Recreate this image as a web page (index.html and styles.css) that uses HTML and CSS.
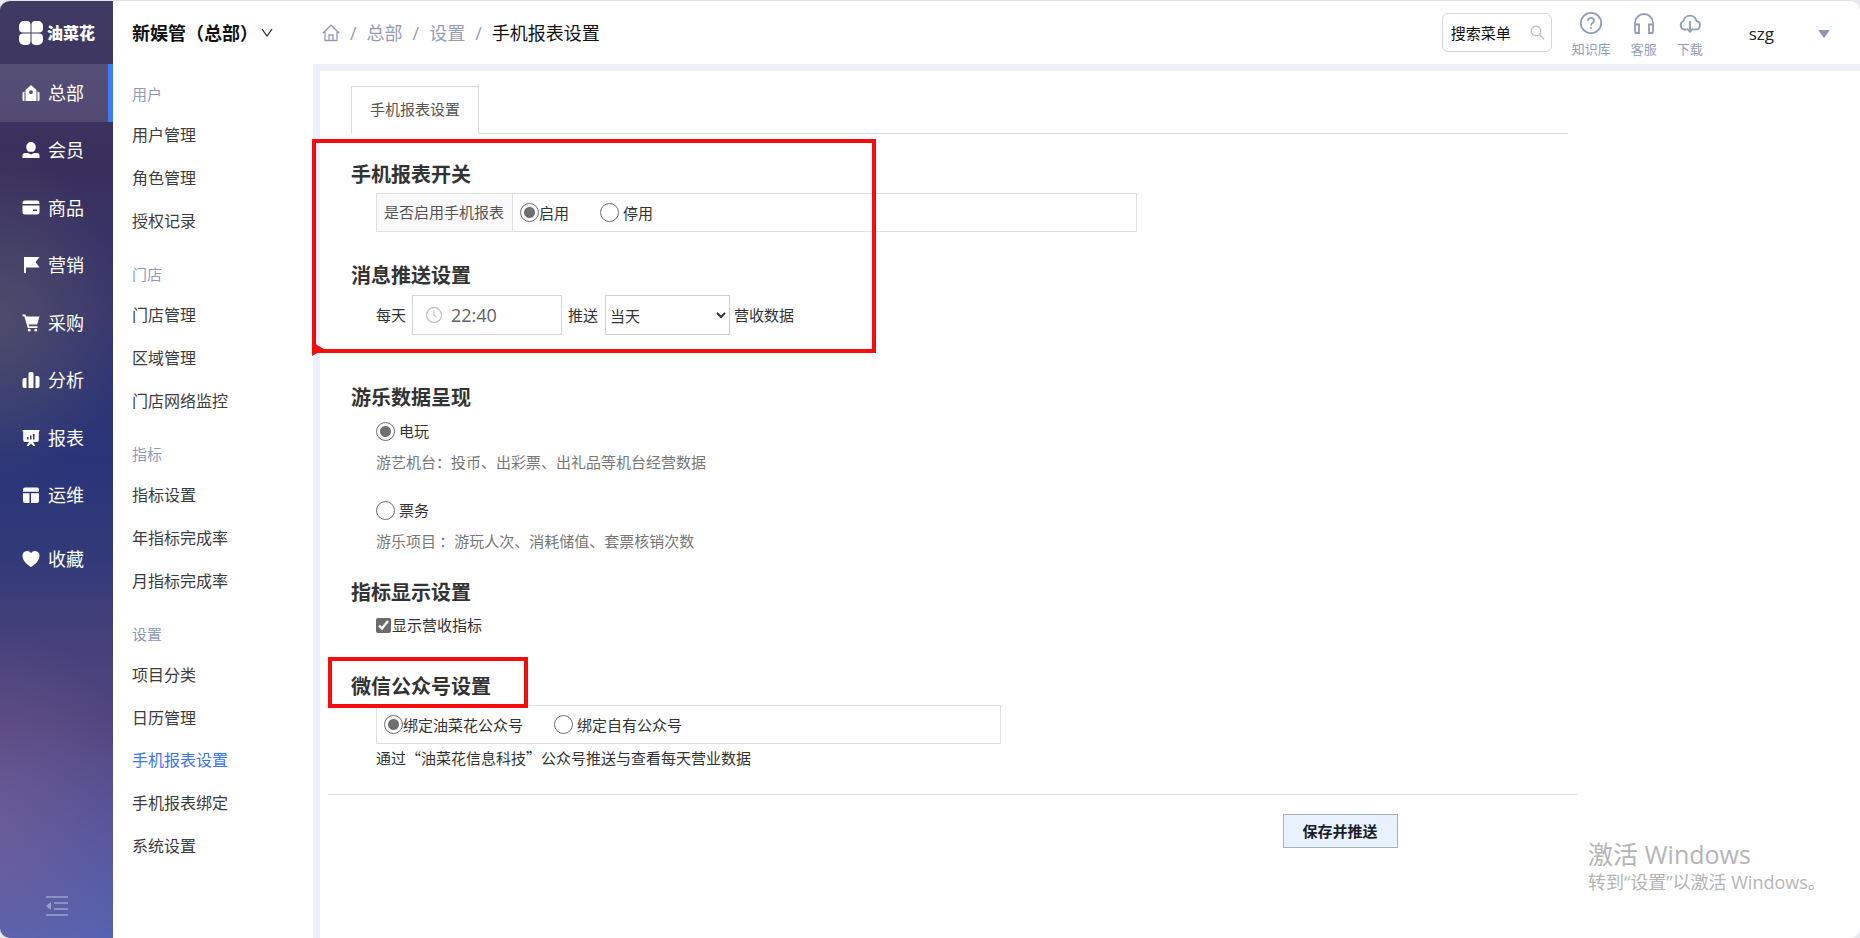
FILE: index.html
```html
<!DOCTYPE html>
<html lang="zh-CN">
<head>
<meta charset="utf-8">
<title>手机报表设置</title>
<link rel="stylesheet" href="styles.css">
</head>
<body>
<div class="shell">
  <aside class="rail">
    <a class="brand" href="#">
      <svg width="24" height="24" viewBox="0 0 24 24" fill="#fff"><path d="M5 0h3a3.500 3.500 0 0 1 3.500 3.500v8H4A4 4 0 0 1 0 7.500V5a5 5 0 0 1 5-5z"/><path d="M16 0h3a5 5 0 0 1 5 5v2.500a4 4 0 0 1-4 4h-7.500v-8A3.500 3.500 0 0 1 16 0z"/><path d="M4 12.500h7.500V20a4 4 0 0 1-4 4H5a5 5 0 0 1-5-5v-2.500a4 4 0 0 1 4-4z"/><path d="M12.500 12.500H20a4 4 0 0 1 4 4V19a5 5 0 0 1-5 5h-2.500a4 4 0 0 1-4-4z"/></svg>
      <span>油菜花</span>
    </a>
    <nav class="rail-nav">
      <a class="active" href="#"><svg viewBox="0 0 18 18"><path fill-rule="evenodd" d="M3.500 17V6L9 1l5.500 5v11zM9 6.300a1.900 1.900 0 1 0 0 3.800 1.900 1.900 0 0 0 0-3.800z"/><path d="M.5 8.500 2.500 7.500V17H1.500a1 1 0 0 1-1-1zM17.500 8.500l-2-1V17h1a1 1 0 0 0 1-1z"/></svg>总部</a>
      <a href="#"><svg viewBox="0 0 18 18"><path d="M9 1a4.800 4.800 0 0 1 4.800 4.800c0 2.300-1 4-2.300 5h-5c-1.300-1-2.300-2.700-2.300-5A4.800 4.800 0 0 1 9 1zM3 12h3l3 1.500 3-1.500h3a2.500 2.500 0 0 1 2.500 2.500V17H.5v-2.500A2.500 2.500 0 0 1 3 12z"/></svg>会员</a>
      <a href="#"><svg viewBox="0 0 18 18"><path d="M3 1.500h12A2.500 2.500 0 0 1 17.500 4v1H.5V4A2.500 2.500 0 0 1 3 1.500z"/><path fill-rule="evenodd" d="M.5 6.500h17V13a2.500 2.500 0 0 1-2.500 2.500H3A2.500 2.500 0 0 1 .5 13zM11 10.500v1.500h4v-1.500z"/></svg>商品</a>
      <a href="#"><svg viewBox="0 0 18 18"><path d="M2 1h15.500l-4 5 4 5.500H4V17H2z"/></svg>营销</a>
      <a href="#"><svg viewBox="0 0 18 18"><path d="M.5.5h2.800l1 2H17.500l-2.300 8H6.500l.6 1.800h8.400v1.700H5.800L2.300 2.200H.5z"/><circle cx="7.200" cy="16.200" r="1.400"/><circle cx="13.800" cy="16.200" r="1.400"/></svg>采购</a>
      <a href="#"><svg viewBox="0 0 18 18"><path d="M2.500 7h2v10h-2a2 2 0 0 1-2-2V9a2 2 0 0 1 2-2zM8 1h2a1.500 1.500 0 0 1 1.500 1.500V17h-5V2.500A1.500 1.500 0 0 1 8 1zM13.500 5h2a2 2 0 0 1 2 2v8a2 2 0 0 1-2 2h-2z"/></svg>分析</a>
      <a href="#"><svg viewBox="0 0 18 18"><path fill-rule="evenodd" d="M.5 1h17v1.500h-.7V11a2 2 0 0 1-2 2H11l2.500 4h-2.200L9 14.500 6.700 17H4.500L7 13H3.200a2 2 0 0 1-2-2V2.500H.5zM5 8v2.500h1.500V8zm3-1.500v4h1.500v-4zM11 5v5.500h1.500V5z"/></svg>报表</a>
      <a href="#"><svg viewBox="0 0 18 18"><path d="M3 1.500h12a2 2 0 0 1 2 2v2.200H1V3.500a2 2 0 0 1 2-2zM1 7.200h6.500V17H3a2 2 0 0 1-2-2zM9 7.200h8V15a2 2 0 0 1-2 2H9z"/></svg>运维</a>
    </nav>
    <nav class="rail-fav">
      <a href="#"><svg viewBox="0 0 18 18"><path d="M9 17C6 15 .5 11 .5 6A4.700 4.700 0 0 1 9 3a4.700 4.700 0 0 1 8.500 3c0 5-5.500 9-8.500 11z"/></svg>收藏</a>
    </nav>
    <button class="collapse" aria-label="收起菜单"><svg width="24" height="20" viewBox="0 0 24 20" stroke="#9aa2cc" stroke-width="1.600" fill="none"><path d="M1 1h22M9 7h14M9 13h14M1 19h22"/><path fill="#9aa2cc" stroke="none" d="M6 6v8l-5-4z"/></svg></button>
  </aside>

  <aside class="side">
    <button class="org">新娱管（总部）<svg width="12" height="10" viewBox="0 0 12 10" fill="none" stroke="#222" stroke-width="1.200"><path d="m1 1 5 7 5-7"/></svg></button>
    <nav>
      <h2>用户</h2>
      <ul><li><a href="#">用户管理</a></li><li><a href="#">角色管理</a></li><li><a href="#">授权记录</a></li></ul>
      <h2>门店</h2>
      <ul><li><a href="#">门店管理</a></li><li><a href="#">区域管理</a></li><li><a href="#">门店网络监控</a></li></ul>
      <h2>指标</h2>
      <ul><li><a href="#">指标设置</a></li><li><a href="#">年指标完成率</a></li><li><a href="#">月指标完成率</a></li></ul>
      <h2>设置</h2>
      <ul class="five"><li><a href="#">项目分类</a></li><li><a href="#">日历管理</a></li><li><a class="current" href="#">手机报表设置</a></li><li><a href="#">手机报表绑定</a></li><li><a href="#">系统设置</a></li></ul>
    </nav>
  </aside>

  <div class="page">
    <header class="topbar">
      <nav class="crumbs">
        <a href="#" aria-label="首页"><svg width="18" height="18" viewBox="0 0 18 18" fill="none" stroke="#959db5" stroke-width="1.300"><path d="M.7 9.200 9 1.200l8.300 8M3 7.500V16.500h12V7.500M7 16.500v-5.500h4v5.500"/></svg></a>
        <span>/</span><a href="#">总部</a><span>/</span><a href="#">设置</a><span>/</span><b>手机报表设置</b>
      </nav>
      <div class="tools">
        <label class="search"><input type="text" value="搜索菜单" aria-label="搜索菜单"><svg width="15" height="15" viewBox="0 0 15 15" fill="none" stroke="#bbb" stroke-width="1.200"><circle cx="6" cy="6" r="4.800"/><path d="m9.500 9.500 4.500 4.500"/></svg></label>
        <a class="tool" href="#"><svg width="24" height="24" viewBox="0 0 24 24"><circle cx="12" cy="12" r="10.200"/><path d="M9 10c0-4 6-4 6-.5 0 2.200-3 2.500-3 5M12 16.200v1.600"/></svg>知识库</a>
        <a class="tool" href="#"><svg width="24" height="24" viewBox="0 0 24 24"><path d="M3 20v-8a9 9 0 0 1 18 0v8M3 13.500h4V22H4a1 1 0 0 1-1-1zM21 13.500h-4V22h3a1 1 0 0 0 1-1z"/></svg>客服</a>
        <a class="tool" href="#"><svg width="24" height="24" viewBox="0 0 24 24"><path d="M8.500 18.500H6A4.500 4.500 0 0 1 5.500 10 6.600 6.600 0 0 1 18.500 10 4.300 4.300 0 0 1 18 18.500h-2.500M12 10v10.500M9 17.700l3 3 3-3"/></svg>下载</a>
        <button class="user">szg<svg width="12" height="8" viewBox="0 0 12 8" fill="#8f96b3"><path d="M0 0h12L6 8z"/></svg></button>
      </div>
    </header>

    <main class="content">
      <div class="tabs"><button class="tab">手机报表设置</button></div>
      <form class="settings">
        <section class="switch">
          <h3>手机报表开关</h3>
          <div class="field wide">
            <span class="name">是否启用手机报表</span>
            <div class="choices">
              <span><input type="radio" name="on" id="on1" checked><label for="on1">启用</label></span>
              <span class="spaced"><input type="radio" name="on" id="on2"><label for="on2">停用</label></span>
            </div>
          </div>
        </section>
        <section class="push">
          <h3>消息推送设置</h3>
          <div class="line">
            <label for="time">每天</label>
            <span class="time"><svg width="18" height="18" viewBox="0 0 18 18" fill="none" stroke="#c0c4cc" stroke-width="1.300"><circle cx="9" cy="9" r="7.500"/><path d="M9 4.500V9.500l2.500 1.500"/></svg><input id="time" type="text" value="22:40"></span>
            <label for="day">推送</label>
            <select id="day"><option>当天</option></select>
            <span class="tail">营收数据</span>
          </div>
        </section>
        <section class="data">
          <h3>游乐数据呈现</h3>
          <div class="option"><input type="radio" name="kind" id="k1" checked><label for="k1">电玩</label></div>
          <p>游艺机台：投币、出彩票、出礼品等机台经营数据</p>
          <div class="option second"><input type="radio" name="kind" id="k2"><label for="k2">票务</label></div>
          <p>游乐项目 ：游玩人次、消耗储值、套票核销次数</p>
        </section>
        <section class="target">
          <h3>指标显示设置</h3>
          <div class="check"><input type="checkbox" id="show" checked><label for="show">显示营收指标</label></div>
        </section>
        <section class="wechat">
          <h3>微信公众号设置</h3>
          <div class="field">
            <div class="choices">
              <span><input type="radio" name="wx" id="wx1" checked><label for="wx1">绑定油菜花公众号</label></span>
              <span class="spaced"><input type="radio" name="wx" id="wx2"><label for="wx2">绑定自有公众号</label></span>
            </div>
          </div>
          <p class="note">通过“油菜花信息科技”公众号推送与查看每天营业数据</p>
        </section>
        <div class="actions"><button type="button" class="save">保存并推送</button></div>
      </form>
    </main>
  </div>
</div>

<div class="mark mark-switch"><svg width="12" height="16" viewBox="0 0 12 16" fill="#f60c0c"><path d="M0 0l5 4 7 4-12 7z"/></svg></div>
<div class="mark mark-wechat"></div>
<div class="activate"><strong>激活 Windows</strong><span>转到“设置”以激活 Windows。</span></div>
</body>
</html>
```

FILE: styles.css
```css
* { box-sizing: border-box; }
html { background: #e8e9ee; }
body {
  margin: 0;
  font: 15px/24px "Open Sans", "Noto Sans CJK SC", sans-serif;
  color: #333;
}
a { color: inherit; text-decoration: none; }
h2, h3, p, ul { margin: 0; padding: 0; }
ul { list-style: none; }
button, input, select { font: inherit; color: inherit; }
button { padding: 0; border: 0; background: none; cursor: pointer; }

.shell {
  display: grid;
  grid-template-columns: 113px 200px 1fr;
  min-height: 100vh;
  border-top: 1px solid #e2e2e6;
  border-radius: 10px;
  background: #fff;
  overflow: hidden;
}

/* primary navigation */
.rail {
  display: flex;
  flex-direction: column;
  color: #fff;
  background:
    radial-gradient(ellipse 120px 170px at 0 34%, rgba(100, 96, 104, .5), transparent),
    radial-gradient(ellipse 140px 200px at 0 88%, rgba(128, 98, 150, .5), transparent),
    linear-gradient(#403b63 0, #3d3562 8%, #392f5d 18%, #38386e 33%, #293478 49%, #343a78 60%, #44407a 68%, #51457f 77%, #5357a0 90%, #5463b2 100%);
}
.brand {
  display: flex;
  align-items: center;
  gap: 4px;
  height: 63px;
  padding-left: 19px;
  font-size: 16px;
  font-weight: 900;
}
.rail-nav { display: grid; grid-auto-rows: 1fr; height: 460px; }
.rail-fav { display: grid; height: 58px; margin-top: 6px; }
.rail-nav a, .rail-fav a {
  display: flex;
  align-items: center;
  gap: 8px;
  padding-left: 22px;
  font-size: 18px;
}
.rail-nav .active { background: rgba(255, 255, 255, .12); border-right: 5px solid #3d7bf7; }
.rail-nav svg, .rail-fav svg { width: 18px; height: 18px; fill: #fff; }
.collapse { margin: auto auto 22px; line-height: 0; }

/* secondary navigation */
.side { padding-left: 19px; color: #3c3c3c; }
.org {
  display: flex;
  align-items: center;
  gap: 3px;
  height: 63px;
  font-size: 18px;
  font-weight: 700;
  color: #111;
}
.side nav { padding-top: 10px; }
.side h2 { height: 40px; font-size: 15px; font-weight: 400; line-height: 40px; color: #8f9bb8; }
.side ul { display: grid; grid-auto-rows: 1fr; align-items: center; height: 128px; margin-bottom: 12px; font-size: 16px; }
.side .five { height: 213px; }
.side .current { color: #3d73f5; }

/* top bar */
.page { display: flex; flex-direction: column; min-width: 0; }
.topbar { display: flex; align-items: center; justify-content: space-between; height: 63px; padding: 0 30px 0 9px; }
.crumbs { display: flex; align-items: center; gap: 10px; font-size: 18px; color: #959db5; }
.crumbs svg { display: block; }
.crumbs b { font-weight: 400; color: #111; }
.tools { display: flex; align-items: center; gap: 20px; }
.search {
  display: flex;
  align-items: center;
  width: 110px;
  height: 39px;
  padding: 0 6px 0 8px;
  border: 1px solid #d6d8de;
  border-radius: 6px;
}
.search input { flex: 1; min-width: 0; padding: 0; border: 0; outline: 0; background: none; color: #111; }
.tool { display: flex; flex-direction: column; align-items: center; gap: 4px; padding-top: 4px; font-size: 13px; line-height: 20px; color: #949cb8; }
.tool svg { fill: none; stroke: #949cb8; stroke-width: 1.8; }
.user { display: flex; align-items: center; gap: 44px; margin-left: 26px; padding-top: 2px; font-size: 17px; color: #222; }

/* settings page */
.content { flex: 1; border-top: 7px solid #edf1fb; border-left: 7px solid #edf1fb; }
.tabs { display: flex; width: 79%; margin: 15px 0 0 31px; border-bottom: 1px solid #d9dade; }
.tab { height: 48px; margin-bottom: -1px; padding: 0 18px 2px; border: 1px solid #d9dade; border-bottom-color: #fff; background: #fff; color: #555; }
.settings { padding: 25px 0 0 8px; font-family: "Noto Sans CJK SC", sans-serif; }
section { padding-left: 48px; }
h3 { margin-left: -25px; font-size: 20px; font-weight: 700; line-height: 30px; }
section p { color: #777; }
.switch { margin-bottom: 28px; }
.push { margin-bottom: 47px; }
.data { margin-bottom: 24px; }
.target { margin-bottom: 34px; }
.wechat { margin-bottom: 24px; }

.field { display: flex; width: 625px; max-width: 100%; height: 39px; margin-top: 4px; border: 1px solid #dfdfe1; }
.field.wide { width: 761px; }
.name { padding: 0 8px 0 7px; border-right: 1px solid #e2e2e2; background: #f9f9f9; line-height: 36px; color: #555; }
.choices { display: flex; align-items: center; gap: 31px; padding-left: 7px; }
.choices span, .option, .check { display: flex; align-items: center; }
.spaced, .option { gap: 4px; }

input[type="radio"] {
  appearance: none;
  width: 19px;
  height: 19px;
  margin: 0;
  border: 1px solid #707070;
  border-radius: 50%;
  background: #fff;
}
input[type="radio"]:checked { background: radial-gradient(circle, #707070 5px, #fff 6px); }
input[type="checkbox"] { width: 15px; height: 15px; margin: 0 1px 0 0; accent-color: #6b6b6b; }

.line { display: flex; align-items: center; margin-top: 5px; }
.time { display: flex; align-items: center; width: 150px; height: 40px; margin: 0 6px; padding-left: 12px; border: 1px solid #d4d6dc; }
.time input { width: 100px; padding: 0 0 0 8px; border: 0; outline: 0; font-family: "Open Sans", sans-serif; font-size: 18px; color: #606266; }
select { width: 125px; height: 40px; margin: 0 4px 0 7px; padding: 0; border: 1px solid #d0d0d4; border-radius: 0; background: #fff; }

.option { margin-top: 7px; }
.option + p { margin-top: 7px; }
.option.second { margin-top: 24px; }
.check { margin-top: 6px; }
section .note { margin-top: 2px; color: #333; }
.actions { display: flex; justify-content: flex-end; width: 81.5%; padding: 19px 179px 0 0; border-top: 1px solid #e0e1e4; }
.save { width: 115px; height: 34px; border: 1px solid #a9b0bd; background: #e9f1ff; font-weight: 700; color: #1b1e28; }

/* callouts drawn over the page */
.mark { position: absolute; border: 4px solid #f60c0c; pointer-events: none; }
.mark-switch { top: 139px; left: 312px; width: 564px; height: 214px; }
.mark-switch svg { position: absolute; bottom: -8px; left: -4px; }
.mark-wechat { top: 657px; left: 328px; width: 200px; height: 51px; }

.activate { position: absolute; right: 32px; bottom: 44px; display: grid; width: 240px; font-size: 18px; line-height: 24px; color: #b5b5b5; white-space: nowrap; }
.activate strong { font-size: 25px; font-weight: 400; line-height: 32px; }
```
